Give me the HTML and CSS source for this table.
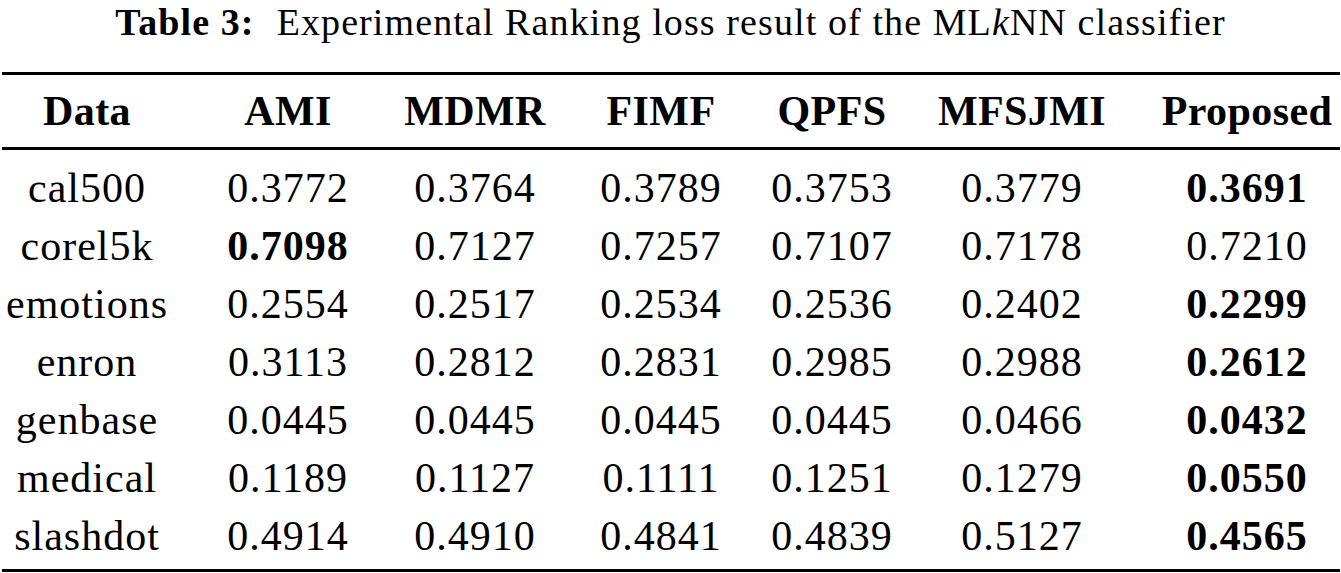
FILE: index.html
```html
<!DOCTYPE html>
<html>
<head>
<meta charset="utf-8">
<link rel="stylesheet" href="styles.css">
</head>
<body>
<div class="page">
  <p class="caption"><b>Table 3:</b><span class="gap"></span>Experimental Ranking loss result of the ML<i>k</i>NN classifier</p>
  <table class="results">
    <colgroup>
      <col class="w-data"><col class="w-ami"><col class="w-mdmr"><col class="w-fimf"><col class="w-qpfs"><col class="w-mfsjmi"><col class="w-prop">
    </colgroup>
    <thead>
      <tr>
        <th class="c-data">Data</th><th class="c-ami">AMI</th><th class="c-mdmr">MDMR</th><th class="c-fimf">FIMF</th><th class="c-qpfs">QPFS</th><th class="c-mfsjmi">MFSJMI</th><th class="c-prop">Proposed</th>
      </tr>
    </thead>
    <tbody>
      <tr class="first"><td class="c-data">cal500</td><td class="c-ami">0.3772</td><td class="c-mdmr">0.3764</td><td class="c-fimf">0.3789</td><td class="c-qpfs">0.3753</td><td class="c-mfsjmi">0.3779</td><td class="c-prop best">0.3691</td></tr>
      <tr><td class="c-data">corel5k</td><td class="c-ami best">0.7098</td><td class="c-mdmr">0.7127</td><td class="c-fimf">0.7257</td><td class="c-qpfs">0.7107</td><td class="c-mfsjmi">0.7178</td><td class="c-prop">0.7210</td></tr>
      <tr><td class="c-data">emotions</td><td class="c-ami">0.2554</td><td class="c-mdmr">0.2517</td><td class="c-fimf">0.2534</td><td class="c-qpfs">0.2536</td><td class="c-mfsjmi">0.2402</td><td class="c-prop best">0.2299</td></tr>
      <tr><td class="c-data">enron</td><td class="c-ami">0.3113</td><td class="c-mdmr">0.2812</td><td class="c-fimf">0.2831</td><td class="c-qpfs">0.2985</td><td class="c-mfsjmi">0.2988</td><td class="c-prop best">0.2612</td></tr>
      <tr><td class="c-data">genbase</td><td class="c-ami">0.0445</td><td class="c-mdmr">0.0445</td><td class="c-fimf">0.0445</td><td class="c-qpfs">0.0445</td><td class="c-mfsjmi">0.0466</td><td class="c-prop best">0.0432</td></tr>
      <tr><td class="c-data">medical</td><td class="c-ami">0.1189</td><td class="c-mdmr">0.1127</td><td class="c-fimf">0.1111</td><td class="c-qpfs">0.1251</td><td class="c-mfsjmi">0.1279</td><td class="c-prop best">0.0550</td></tr>
      <tr class="last"><td class="c-data">slashdot</td><td class="c-ami">0.4914</td><td class="c-mdmr">0.4910</td><td class="c-fimf">0.4841</td><td class="c-qpfs">0.4839</td><td class="c-mfsjmi">0.5127</td><td class="c-prop best">0.4565</td></tr>
    </tbody>
  </table>
</div>
</body>
</html>
```

FILE: styles.css
```css
html, body {
  margin: 0;
  padding: 0;
  background: #ffffff;
}

.page {
  width: 1341px;
  height: 573px;
  overflow: hidden;
  font-family: "Liberation Serif", "Times New Roman", serif;
  color: #000000;
}

.caption {
  margin: 0;
  font-size: 38px;
  line-height: 44px;
  letter-spacing: 1.1px;
  text-align: center;
  white-space: nowrap;
}

.caption b {
  font-weight: 700;
}

.caption .gap {
  display: inline-block;
  width: 22px;
}

.results {
  margin: 28px 0 0 2px;
  width: 1338px;
  table-layout: fixed;
  border-collapse: collapse;
  font-size: 42px;
  line-height: 58px;
  letter-spacing: 1px;
}

.w-data { width: 185px; }
.w-ami { width: 194px; }
.w-mdmr { width: 187px; }
.w-fimf { width: 178px; }
.w-qpfs { width: 181px; }
.w-mfsjmi { width: 207px; }
.w-prop { width: 206px; }

.results th,
.results td {
  padding: 0;
  text-align: center;
  white-space: nowrap;
  vertical-align: baseline;
}

.results th {
  font-weight: 700;
  letter-spacing: 0.4px;
  border-top: 3px solid #000;
  border-bottom: 3px solid #000;
  padding-top: 7px;
  padding-bottom: 7px;
}

.results tr.first td { padding-top: 9px; }
.results tr.last td {
  padding-bottom: 4px;
  border-bottom: 3px solid #000;
}

.results .best { font-weight: 700; }

.c-data { padding-right: 15px !important; }
.c-ami { padding-left: 8px !important; }
.c-mdmr { padding-left: 1px !important; }
.c-fimf { padding-left: 8px !important; }
.c-qpfs { padding-right: 9px !important; }
.c-mfsjmi { padding-right: 17px !important; }
.c-prop { padding-left: 20px !important; }
```
